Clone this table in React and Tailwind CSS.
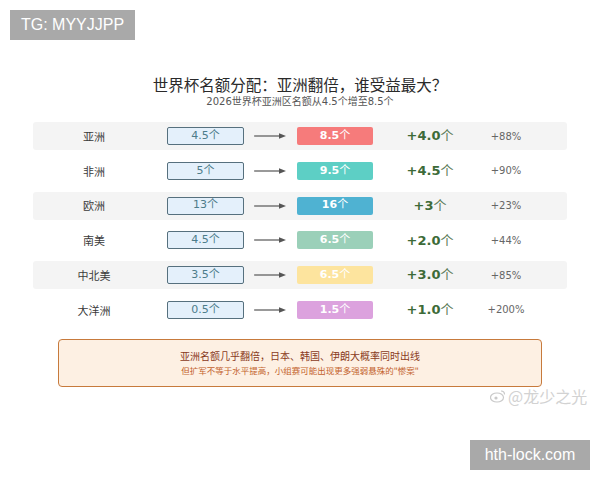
import React from 'react';

const rows = [
  { name: '亚洲', from: '4.5', to: '8.5', color: 'bg-[#f67b7b]', inc: '+4.0', pct: '+88%', shade: true },
  { name: '非洲', from: '5', to: '9.5', color: 'bg-[#5dcfc5]', inc: '+4.5', pct: '+90%', shade: false },
  { name: '欧洲', from: '13', to: '16', color: 'bg-[#4fb2d2]', inc: '+3', pct: '+23%', shade: true },
  { name: '南美', from: '4.5', to: '6.5', color: 'bg-[#9bd0b9]', inc: '+2.0', pct: '+44%', shade: false },
  { name: '中北美', from: '3.5', to: '6.5', color: 'bg-[#fde49e]', inc: '+3.0', pct: '+85%', shade: true },
  { name: '大洋洲', from: '0.5', to: '1.5', color: 'bg-[#dca2de]', inc: '+1.0', pct: '+200%', shade: false },
];

function Arrow() {
  return (
    <svg width="32" height="8" viewBox="0 0 32 8">
      <line x1="0" y1="4" x2="27" y2="4" stroke="#555" strokeWidth="1.2" />
      <path d="M25 1.2 L32 4 L25 6.8 Z" fill="#555" />
    </svg>
  );
}

export default function App() {
  return (
    <div className="relative w-[600px] h-[480px] bg-white overflow-hidden font-['DejaVu_Sans','Noto_Sans_CJK_SC',sans-serif]">
      {/* top-left watermark */}
      <div className="absolute top-[10px] left-[10px] w-[125px] h-[30px] bg-[#a9a9a9] text-white text-[16px] flex items-center justify-center font-['Liberation_Sans','Noto_Sans_CJK_SC',sans-serif]">
        TG: MYYJJPP
      </div>

      {/* heading */}
      <div className="pt-[74px] flex flex-col items-center">
        <h1 className="text-[15.5px] leading-[20px] text-[#2a2a2a] font-['Noto_Sans_CJK_SC',sans-serif]">
          世界杯名额分配：亚洲翻倍，谁受益最大？
        </h1>
        <p className="mt-[1px] text-[10px] leading-[13px] text-[#555]">2026世界杯亚洲区名额从4.5个增至8.5个</p>
      </div>

      {/* rows */}
      <div className="mt-[14px] mx-[33px] flex flex-col gap-[6.8px]">
        {rows.map((r) => (
          <div
            key={r.name}
            className={`h-[28px] flex items-center rounded-[3px] ${r.shade ? 'bg-[#f4f4f4]' : 'bg-white'}`}
          >
            <div className="w-[122px] text-center text-[11px] text-[#3a3a3a] font-['Noto_Sans_CJK_SC',sans-serif]">{r.name}</div>
            <div className="ml-[12px] w-[77px] h-[18px] rounded-[2px] border border-[#56707e] bg-[#e4f0fb] flex items-center justify-center text-[11px] text-[#4d7c8a]">
              {r.from}个
            </div>
            <div className="ml-[10px] w-[32px] flex items-center">
              <Arrow />
            </div>
            <div className={`ml-[11px] w-[76px] h-[18px] rounded-[2px] ${r.color} flex items-center justify-center text-[11px] text-white`}>
              <span className="font-bold">{r.to}</span>个
            </div>
            <div className="ml-[7px] w-[100px] flex justify-center items-baseline text-[13px] text-[#3d6b38]">
              <span className="font-bold">{r.inc}</span>
              <span className="text-[#5b7a58]">个</span>
            </div>
            <div className="w-[52px] flex justify-center text-[10px] text-[#666]">{r.pct}</div>
          </div>
        ))}
      </div>

      {/* note box */}
      <div className="mt-[15px] mx-[58px] h-[48px] rounded-[4px] border-[1.5px] border-[#c77a3c] bg-[#fdf0e3] flex flex-col items-center justify-center gap-[3px] font-['Noto_Sans_CJK_SC',sans-serif]">
        <p className="text-[10px] leading-[13px] text-[#8a3a1c]">亚洲名额几乎翻倍，日本、韩国、伊朗大概率同时出线</p>
        <p className="text-[8.5px] leading-[11px] text-[#c3622c]">但扩军不等于水平提高，小组赛可能出现更多强弱悬殊的"惨案"</p>
      </div>

      {/* weibo watermark */}
      <div className="absolute left-[490px] top-[387px] flex items-center gap-[2px] text-[#d2d2d2]">
        <svg width="16" height="14" viewBox="0 0 16 14">
          <ellipse cx="7" cy="8.5" rx="6.5" ry="4.5" fill="none" stroke="#c9c9c9" strokeWidth="1.2" />
          <circle cx="6" cy="9" r="1.6" fill="#c9c9c9" />
          <path d="M11 2 Q14.5 2 14.5 5.5" fill="none" stroke="#c9c9c9" strokeWidth="1.2" />
        </svg>
        <span className="text-[16px] leading-[18px] font-['Noto_Sans_CJK_SC',sans-serif]">@龙少之光</span>
      </div>

      {/* bottom-right watermark */}
      <div className="absolute left-[470px] top-[440px] w-[120px] h-[30px] bg-[#a9a9a9] text-white text-[16px] flex items-center justify-center font-['Liberation_Sans',sans-serif]">
        hth-lock.com
      </div>
    </div>
  );
}
